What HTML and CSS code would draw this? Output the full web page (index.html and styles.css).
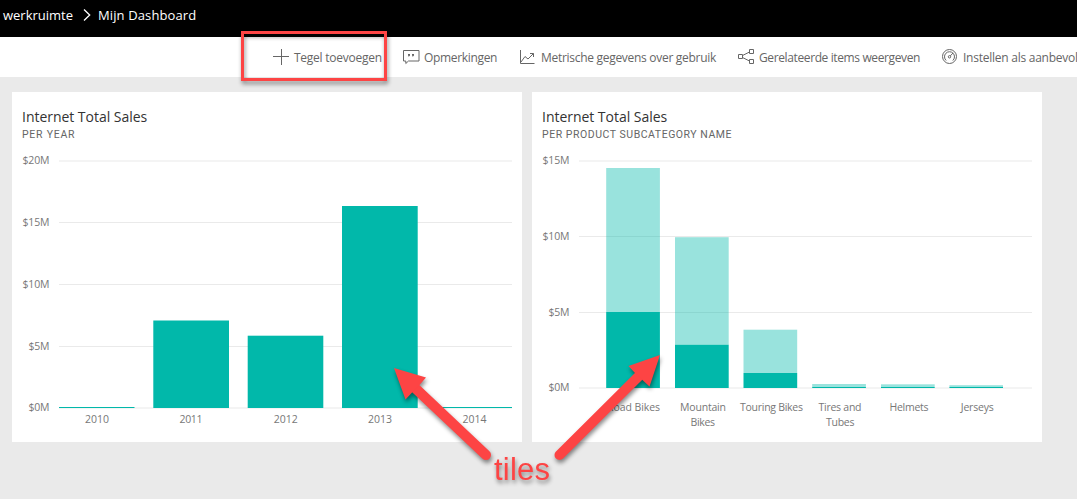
FILE: index.html
```html
<!DOCTYPE html>
<html lang="nl">
<head>
<meta charset="utf-8">
<title>Mijn Dashboard</title>
<link rel="stylesheet" href="styles.css">
</head>
<body>
<div class="app">
  <header class="breadcrumb">
    <span class="crumb-parent">werkruimte</span>
    <svg class="chevron" width="8" height="12" viewBox="0 0 8 12"><path d="M1 .5 6.7 6 1 11.500"/></svg>
    <span class="crumb-current">Mijn Dashboard</span>
  </header>
  <nav class="toolbar">
    <div class="action add">
      <svg class="icon" width="17" height="18" viewBox="0 0 17 18"><path d="M0 8.500h16M8.500 1v16"/></svg>
      <span>Tegel toevoegen</span>
    </div>
    <div class="action comments">
      <svg class="icon" width="17" height="18" viewBox="0 0 17 18"><path d="M.5 2.500h15.500v10.500H5.500L2.800 15.500V13H.5z"/><path class="quotes" d="M5 6h2v1.500l-1 1H5.300V7.500H5zM9 6h2v1.500l-1 1H9.300V7.500H9z"/></svg>
      <span>Opmerkingen</span>
    </div>
    <div class="action metrics">
      <svg class="icon" width="17" height="18" viewBox="0 0 17 18"><path d="M.5 2v13.500H14.500M1 14 5 8.500l3 2.500 5.500-5.500M10 5.500h3.500v3.500"/></svg>
      <span>Metrische gegevens over gebruik</span>
    </div>
    <div class="action related">
      <svg class="icon" width="17" height="18" viewBox="0 0 17 18"><path d="M.5 6.500h4v4h-4zM11.500 1.500h4v4h-4zM11.500 11.500h4v4h-4zM4.500 7.500 11.500 4M4.500 9.500 11.500 13"/></svg>
      <span>Gerelateerde items weergeven</span>
    </div>
    <div class="action featured">
      <svg class="icon" width="17" height="18" viewBox="0 0 17 18"><circle cx="7.500" cy="8.500" r="7"/><path d="M4.200 12.500a5 5 0 1 1 6.600 0M8.300 7.900l2.800-3"/><circle cx="7.500" cy="8.800" r="1.200"/></svg>
      <span>Instellen als aanbevolen</span>
    </div>
  </nav>
  <main class="board">
    <section class="tile">
      <h2>Internet Total Sales</h2>
      <p class="sub sub-year">PER YEAR</p>
      <svg class="chart" width="510" height="294" viewBox="12 148 510 294">
        <g class="grid">
          <path class="edge" d="M59 161H512M59 408H512"/>
          <path d="M59 222.500H512M59 284.500H512M59 346.500H512"/>
        </g>
        <g class="solid">
          <rect x="59" y="407" width="75.500" height="1"/>
          <rect x="153.300" y="320.500" width="75.700" height="87.500"/>
          <rect x="247.700" y="335.700" width="75.600" height="72.300"/>
          <rect x="342" y="206" width="75.700" height="202"/>
          <rect x="436.400" y="407" width="75.600" height="1"/>
        </g>
        <g class="axis">
          <text x="22.500" y="164" textLength="27">$20M</text>
          <text x="22.500" y="226" textLength="27">$15M</text>
          <text x="22.500" y="288" textLength="27">$10M</text>
          <text x="28.500" y="350" textLength="21">$5M</text>
          <text x="28.500" y="411" textLength="21">$0M</text>
          <text x="85" y="423" textLength="24">2010</text>
          <text x="179.500" y="423" textLength="23">2011</text>
          <text x="273.700" y="423" textLength="24">2012</text>
          <text x="368" y="423" textLength="24">2013</text>
          <text x="462.500" y="423" textLength="24">2014</text>
        </g>
      </svg>
    </section>
    <section class="tile">
      <h2>Internet Total Sales</h2>
      <p class="sub sub-product">PER PRODUCT SUBCATEGORY NAME</p>
      <svg class="chart" width="510" height="294" viewBox="532 148 510 294">
        <g class="grid">
          <path class="edge" d="M579 161H1032M579 388H1032"/>
          <path d="M579 236.500H1032M579 312.500H1032"/>
        </g>
        <g class="light">
          <rect x="606.200" y="168" width="53.700" height="144"/>
          <rect x="675" y="237.200" width="53.700" height="107.500"/>
          <rect x="743.500" y="329.700" width="53.700" height="43.300"/>
          <rect x="812.200" y="384" width="53.700" height="3"/>
          <rect x="881" y="384.300" width="53.700" height="2.700"/>
          <rect x="949.400" y="385.200" width="53.600" height="1.800"/>
        </g>
        <g class="solid">
          <rect x="606.200" y="312" width="53.700" height="76"/>
          <rect x="675" y="344.700" width="53.700" height="43.300"/>
          <rect x="743.500" y="373" width="53.700" height="15"/>
          <rect x="812.200" y="387" width="53.700" height="1"/>
          <rect x="881" y="387" width="53.700" height="1"/>
          <rect x="949.400" y="387" width="53.600" height="1"/>
        </g>
        <g class="axis">
          <text x="542.500" y="164" textLength="27">$15M</text>
          <text x="542.500" y="240" textLength="27">$10M</text>
          <text x="548.500" y="316" textLength="21">$5M</text>
          <text x="548.500" y="391" textLength="21">$0M</text>
          <text x="607" y="411" textLength="53">Road Bikes</text>
          <text x="680" y="411" textLength="46">Mountain</text>
          <text x="690.500" y="426" textLength="24.500">Bikes</text>
          <text x="740" y="411" textLength="63">Touring Bikes</text>
          <text x="818.500" y="411" textLength="43">Tires and</text>
          <text x="826" y="426" textLength="28.500">Tubes</text>
          <text x="889.500" y="411" textLength="39">Helmets</text>
          <text x="960.800" y="411" textLength="33">Jerseys</text>
        </g>
      </svg>
    </section>
  </main>
  <svg class="annotations" width="1077" height="500" viewBox="0 0 1077 500">
    <rect class="frame" x="242.500" y="32.500" width="143" height="47"/>
    <path class="shaft" d="M414 387 486 455M640 375 559.500 455"/>
    <path class="head" d="M394 368 426 377.500 419.500 385 412.500 392 405.500 399.500zM660 355 649.500 386.500 642.500 380 635 373 628.500 366z"/>
    <text x="494" y="479.500" textLength="56">tiles</text>
  </svg>
</div>
</body>
</html>
```
FILE: styles.css
```css
body {
  margin: 0;
  background: #fff;
  font-family: "Open Sans", "Noto Sans", sans-serif;
}
.app {
  position: relative;
  width: 1077px;
  height: 499px;
  overflow: hidden;
  background: #eaeaea;
}
.breadcrumb {
  display: flex;
  align-items: center;
  box-sizing: border-box;
  height: 37px;
  padding: 0 0 7px 3px;
  background: #000;
  color: #fff;
  font-size: 13px;
  white-space: nowrap;
}
.crumb-parent {
  width: 80px;
  letter-spacing: 0;
}
.crumb-current {
  margin-left: 7px;
  letter-spacing: 0.12px;
}
.chevron {
  fill: none;
  stroke: #fff;
  stroke-width: 1.3;
}
.toolbar {
  display: grid;
  grid-template-columns: 130px 117px 218px 204px 160px;
  box-sizing: border-box;
  height: 40px;
  padding-left: 273px;
  overflow: hidden;
  background: #fff;
  color: #666;
  font-size: 12px;
  white-space: nowrap;
}
.action {
  display: flex;
  align-items: center;
  gap: 4px;
}
.action span {
  padding-top: 1px;
}
.icon {
  flex: none;
  fill: none;
  stroke: #666;
  stroke-width: 1;
}
.quotes {
  fill: #666;
  stroke: none;
}
.add span { letter-spacing: -0.25px; }
.comments span { letter-spacing: -0.33px; }
.metrics span { letter-spacing: -0.29px; }
.related span { letter-spacing: -0.38px; }
.featured span { letter-spacing: -0.25px; }
.board {
  display: flex;
  gap: 10px;
  padding: 15px 12px;
}
.tile {
  flex: none;
  display: flex;
  flex-direction: column;
  width: 510px;
  height: 350px;
  background: #fff;
}
.tile h2 {
  box-sizing: border-box;
  height: 35px;
  margin: 0;
  padding: 15px 10px 0;
  color: #333;
  font-size: 14px;
  font-weight: 400;
  line-height: 20px;
  letter-spacing: -0.03px;
}
.sub {
  height: 21px;
  margin: 0;
  padding: 0 10px;
  color: #666;
  font-family: "Roboto", sans-serif;
  font-size: 10.5px;
  line-height: 15px;
  letter-spacing: 0.75px;
}
.sub-product {
  letter-spacing: 0.54px;
}
.chart {
  display: block;
}
.grid {
  fill: none;
  stroke: #eaeaea;
}
.edge {
  stroke: #f4f4f4;
  stroke-width: 2;
}
.solid {
  fill: #01b8aa;
}
.light {
  fill: #01b8aa;
  fill-opacity: 0.4;
}
.axis {
  fill: #777;
  font-size: 10.5px;
}
.annotations {
  position: absolute;
  top: 0;
  left: 0;
  fill: #fd4444;
  filter: drop-shadow(1px 3px 2px rgba(0, 0, 0, 0.45));
}
.frame {
  fill: none;
  stroke: #fd4444;
  stroke-width: 3;
}
.shaft {
  fill: none;
  stroke: #fd4444;
  stroke-width: 10;
  stroke-linecap: round;
}
.annotations text {
  font-family: "Liberation Sans", Arial, sans-serif;
  font-size: 31px;
}
```
